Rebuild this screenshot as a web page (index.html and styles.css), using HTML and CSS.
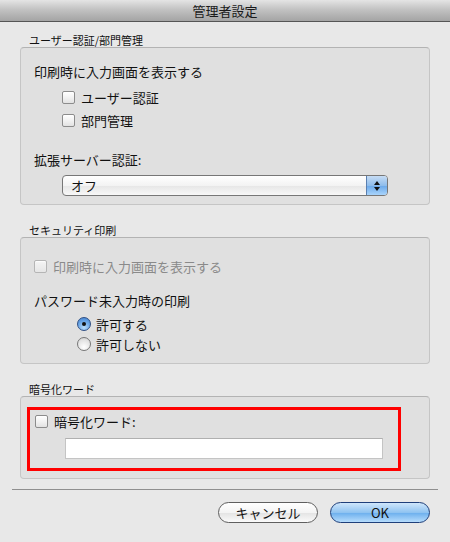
FILE: index.html
```html
<!DOCTYPE html>
<html lang="ja">

<head>
    <meta charset="UTF-8">
    <meta name="viewport" content="width=device-width, initial-scale=1.0">
    <title>管理者設定</title>
    <link rel="stylesheet" href="styles.css">
</head>

<body>
    <div class="window">
        <!-- Barra de título -->
        <div class="titlebar">管理者設定</div>

        <div class="content">
            <!-- ユーザー認証/部門管理 -->
            <div class="group-label first">ユーザー認証/部門管理</div>
            <div class="group-box box-auth">
                <div class="line">印刷時に入力画面を表示する</div>
                <div class="check-list">
                    <label class="row"><span class="checkbox"></span>ユーザー認証</label>
                    <label class="row"><span class="checkbox"></span>部門管理</label>
                </div>
                <div class="line spaced">拡張サーバー認証:</div>
                <div class="popup">
                    <span class="popup-value">オフ</span>
                    <span class="popup-arrows">
                        <svg width="8" height="14" viewBox="0 0 8 14">
                            <path d="M4 2 L7 6 L1 6 Z" fill="#111" />
                            <path d="M1 8 L7 8 L4 12 Z" fill="#111" />
                        </svg>
                    </span>
                </div>
            </div>

            <!-- セキュリティ印刷 -->
            <div class="group-label">セキュリティ印刷</div>
            <div class="group-box box-security">
                <label class="row disabled"><span class="checkbox"></span>印刷時に入力画面を表示する</label>
                <div class="line pw-title">パスワード未入力時の印刷</div>
                <div class="radio-list">
                    <label class="radio-row"><span class="radio checked"></span>許可する</label>
                    <label class="radio-row"><span class="radio"></span>許可しない</label>
                </div>
            </div>

            <!-- 暗号化ワード -->
            <div class="group-label">暗号化ワード</div>
            <div class="group-box box-encrypt">
                <div class="highlight">
                    <label class="row"><span class="checkbox"></span>暗号化ワード:</label>
                    <input type="text" class="text-field">
                </div>
            </div>
        </div>

        <div class="separator"></div>

        <div class="buttons">
            <button class="btn">キャンセル</button>
            <button class="btn btn-default">OK</button>
        </div>
    </div>
</body>

</html>
```

FILE: styles.css
```css
body {
    margin: 0;
    background-color: #e8e8e8;
    font-family: "Noto Sans CJK JP", "Noto Sans", sans-serif;
    color: #111;
}

.window {
    width: 450px;
    height: 542px;
    background-color: #e8e8e8;
}

.titlebar {
    height: 21px;
    line-height: 22px;
    text-align: center;
    font-size: 13px;
    color: #1a1a1a;
    background: linear-gradient(#e4e4e4, #c2c2c2 45%, #a4a4a4);
    border-bottom: 1px solid #555;
}

.content {
    padding: 0 20px;
}

.group-label {
    margin-top: 18px;
    padding-left: 9px;
    font-size: 11px;
    line-height: 14px;
    height: 14px;
}

.group-label.first {
    margin-top: 11px;
}

.group-box {
    box-sizing: border-box;
    background-color: #e0e0e0;
    border: 1px solid #c5c5c5;
    border-top-color: #b3b3b3;
    border-radius: 4px;
    padding-left: 13px;
}

.box-auth {
    height: 158px;
    padding-top: 16px;
}

.line {
    font-size: 13px;
    line-height: 16px;
    height: 16px;
}

.line.spaced {
    margin-top: 20px;
}

.check-list {
    margin-top: 6px;
    padding-left: 28px;
}

.row {
    display: flex;
    align-items: center;
    gap: 6px;
    height: 23px;
    font-size: 13px;
}

.checkbox {
    box-sizing: border-box;
    width: 13px;
    height: 13px;
    border: 1px solid #8c8c8c;
    border-radius: 2px;
    background: linear-gradient(#ffffff, #f2f2f2 50%, #e2e2e2);
    box-shadow: inset 0 1px 1px rgba(255, 255, 255, 0.8);
}

.popup {
    display: flex;
    margin-top: 7px;
    margin-left: 28px;
    width: 326px;
    height: 21px;
    box-sizing: border-box;
    border: 1px solid #777;
    border-radius: 4px;
    overflow: hidden;
    background: linear-gradient(#ffffff, #f3f3f3 50%, #e6e6e6 51%, #f8f8f8);
}

.popup-value {
    flex: 1;
    padding-left: 8px;
    font-size: 13px;
    line-height: 19px;
}

.popup-arrows {
    width: 20px;
    display: flex;
    align-items: center;
    justify-content: center;
    border-left: 1px solid #5a7fb0;
    background: linear-gradient(#c6dcf4, #8fbdec 50%, #6aa8ea 51%, #a9d4fb);
}

.box-security {
    height: 127px;
    padding-top: 17px;
}

.row.disabled {
    height: 22px;
    color: #8a8a8a;
}

.row.disabled .checkbox {
    border-color: #b5b5b5;
    background: linear-gradient(#f4f4f4, #e6e6e6);
}

.line.pw-title {
    margin-top: 16px;
}

.radio-list {
    margin-top: 5px;
    padding-left: 43px;
}

.radio-row {
    display: flex;
    align-items: center;
    gap: 5px;
    height: 20px;
    font-size: 13px;
}

.radio {
    box-sizing: border-box;
    width: 14px;
    height: 14px;
    border-radius: 50%;
    border: 1px solid #777;
    background: radial-gradient(circle at 50% 75%, #ffffff, #e4e4e4 60%, #cfcfcf);
    display: flex;
    align-items: center;
    justify-content: center;
}

.radio.checked {
    border-color: #2f4f84;
    background: radial-gradient(circle at 50% 80%, #b8dcfb, #6aa6e6 55%, #3f7fcf);
}

.radio.checked::after {
    content: "";
    width: 4px;
    height: 4px;
    border-radius: 50%;
    background-color: #111;
}

.box-encrypt {
    height: 83px;
    padding-left: 6px;
    padding-top: 10px;
}

.highlight {
    box-sizing: border-box;
    width: 374px;
    height: 64px;
    border: 3px solid #ff0000;
    padding-left: 5px;
}

.highlight .row {
    height: 22px;
}

.text-field {
    display: block;
    box-sizing: border-box;
    margin: 6px 0 0 30px;
    width: 318px;
    height: 21px;
    border: 1px solid #c4c4c4;
    border-top-color: #b0b0b0;
    background-color: #fff;
    padding: 0 4px;
    font-size: 13px;
    outline: none;
}

.separator {
    margin: 10px 12px 0;
    border-top: 1px solid #8f8f8f;
}

.buttons {
    display: flex;
    justify-content: flex-end;
    gap: 12px;
    padding-right: 20px;
    margin-top: 12px;
}

.btn {
    box-sizing: border-box;
    width: 100px;
    height: 21px;
    border-radius: 11px;
    border: 1px solid #5f5f5f;
    background: linear-gradient(#ffffff, #f4f4f4 50%, #e3e3e3 51%, #fafafa);
    font-family: "Noto Sans CJK JP", "Noto Sans", sans-serif;
    font-size: 13px;
    line-height: 18px;
    color: #111;
    padding: 0;
    cursor: pointer;
}

.btn-default {
    border-color: #1f3f7a;
    background: linear-gradient(#cfe6fb, #8fc3f1 50%, #6aaeed 51%, #b6dcfc);
}
```
